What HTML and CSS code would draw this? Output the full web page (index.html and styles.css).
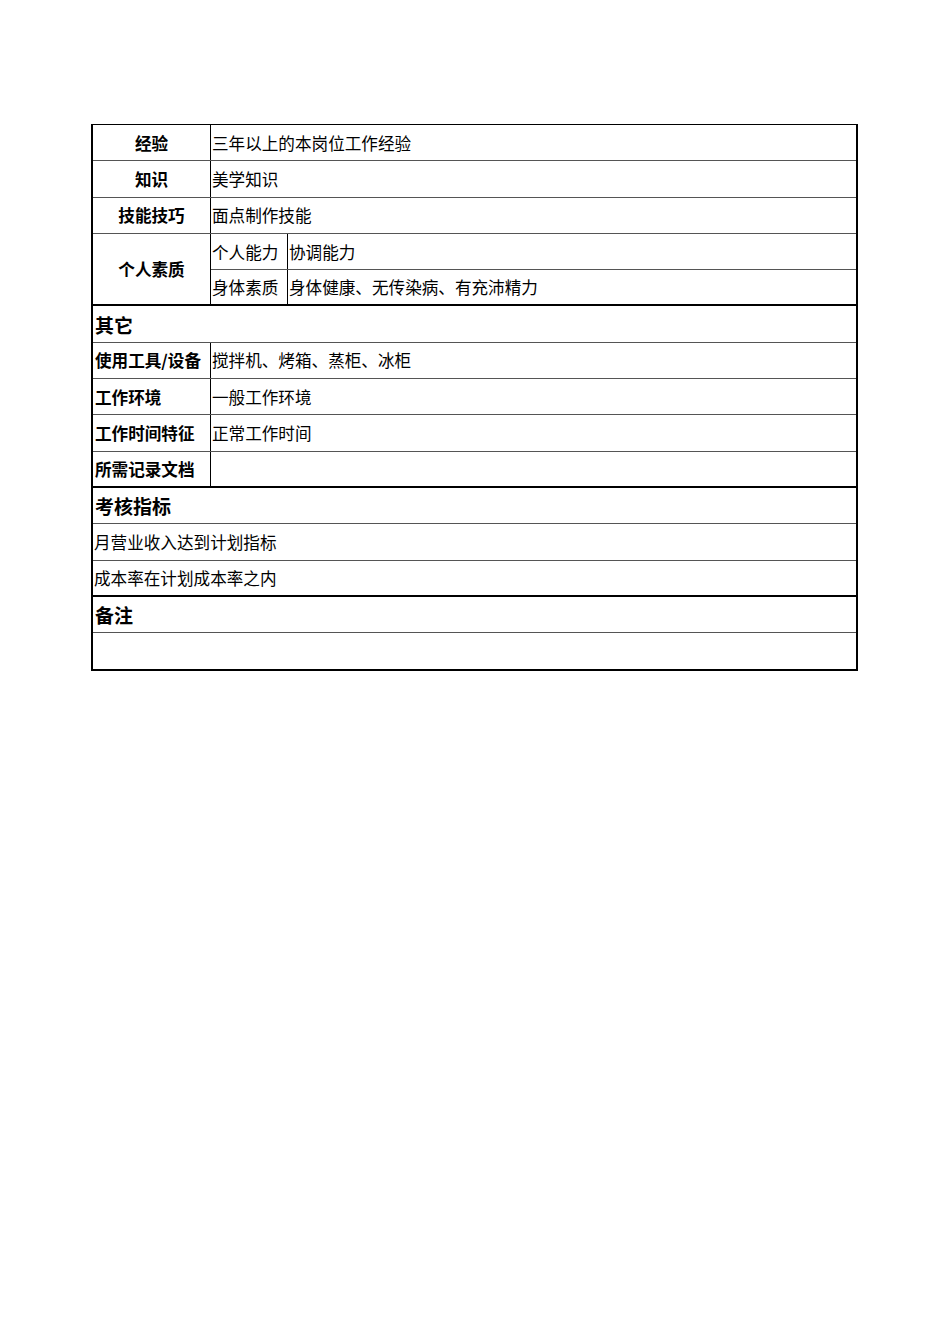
FILE: index.html
```html
<!DOCTYPE html>
<html lang="zh-CN">
<head>
<meta charset="utf-8">
<title>岗位说明</title>
<link rel="stylesheet" href="styles.css">
</head>
<body>
<div class="sheet">
  <div class="row">
    <div class="label center">经验</div>
    <div class="cell">三年以上的本岗位工作经验</div>
  </div>
  <div class="row">
    <div class="label center">知识</div>
    <div class="cell">美学知识</div>
  </div>
  <div class="row">
    <div class="label center">技能技巧</div>
    <div class="cell">面点制作技能</div>
  </div>
  <div class="group thick">
    <div class="label center">个人素质</div>
    <div class="sub">
      <div class="row">
        <div class="sublabel">个人能力</div>
        <div class="cell">协调能力</div>
      </div>
      <div class="row last">
        <div class="sublabel">身体素质</div>
        <div class="cell">身体健康、无传染病、有充沛精力</div>
      </div>
    </div>
  </div>
  <div class="row head"><div class="cell">其它</div></div>
  <div class="row">
    <div class="label">使用工具/设备</div>
    <div class="cell">搅拌机、烤箱、蒸柜、冰柜</div>
  </div>
  <div class="row">
    <div class="label">工作环境</div>
    <div class="cell">一般工作环境</div>
  </div>
  <div class="row">
    <div class="label">工作时间特征</div>
    <div class="cell">正常工作时间</div>
  </div>
  <div class="row thick">
    <div class="label">所需记录文档</div>
    <div class="cell"></div>
  </div>
  <div class="row head"><div class="cell">考核指标</div></div>
  <div class="row"><div class="cell plain">月营业收入达到计划指标</div></div>
  <div class="row thick"><div class="cell plain">成本率在计划成本率之内</div></div>
  <div class="row head"><div class="cell">备注</div></div>
  <div class="row last"><div class="cell plain"></div></div>
</div>
</body>
</html>
```

FILE: styles.css
```css
html, body {
  margin: 0;
  padding: 0;
  background: #fff;
}

body {
  font-family: "Noto Sans CJK SC", "Liberation Sans", sans-serif;
  color: #000;
  font-size: 16.6px;
}

.sheet {
  box-sizing: border-box;
  width: 767px;
  margin: 124px 0 0 91px;
  border: 2px solid #000;
  border-top-width: 1px;
}

.row {
  box-sizing: border-box;
  display: flex;
  height: 36.3px;
  border-bottom: 1px solid #555;
}

.row.thick {
  border-bottom: 2px solid #000;
}

.row.last {
  border-bottom: none;
}

.group {
  display: flex;
  box-sizing: border-box;
  height: 72.6px;
}

.group.thick {
  border-bottom: 2px solid #000;
}

.group .row {
  height: 36.3px;
}

.group .row.last {
  height: 34.3px;
}

.sub {
  flex: 1;
  display: flex;
  flex-direction: column;
}

.label {
  box-sizing: border-box;
  width: 118px;
  flex: none;
  border-right: 1px solid #000;
  display: flex;
  align-items: center;
  padding-left: 2px;
  font-weight: 700;
  white-space: nowrap;
}

.label.center {
  justify-content: center;
  padding-left: 0;
}

.sublabel {
  box-sizing: border-box;
  width: 77px;
  flex: none;
  border-right: 1px solid #000;
  display: flex;
  align-items: center;
  padding-left: 1px;
  white-space: nowrap;
}

.cell {
  flex: 1;
  display: flex;
  align-items: center;
  padding-left: 1px;
  white-space: nowrap;
}

.cell.plain {
  padding-left: 1px;
}

.head .cell {
  font-size: 19px;
  font-weight: 700;
  padding-left: 2px;
}
```
